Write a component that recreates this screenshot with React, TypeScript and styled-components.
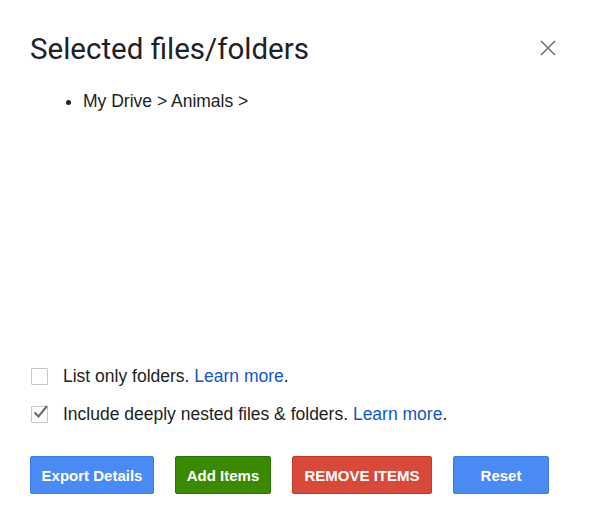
import styled, { createGlobalStyle } from "styled-components";

const GlobalStyle = createGlobalStyle`
  html, body {
    margin: 0;
    padding: 0;
    background: #ffffff;
  }
`;

export default function App() {
  return (
    <>
      <GlobalStyle />
      <Dialog>
        <Header>
          <Title>Selected files/folders</Title>
          <CloseButton aria-label="Close">
            <svg width="16" height="16" viewBox="0 0 16 16">
              <path d="M1 1 L15 15 M15 1 L1 15" stroke="#757575" strokeWidth="1.6" fill="none" />
            </svg>
          </CloseButton>
        </Header>
        <PathList>
          <li>My Drive &gt; Animals &gt;</li>
        </PathList>
        <Options>
          <OptionRow>
            <CheckBox />
            <OptionText>
              List only folders. <LearnMore href="#">Learn more</LearnMore>.
            </OptionText>
          </OptionRow>
          <OptionRow>
            <CheckBox>
              <svg width="20" height="20" viewBox="0 0 20 20">
                <path d="M3.5 9.5 L7.5 13.5 L16 3" stroke="#6a6a6a" strokeWidth="2" fill="none" />
              </svg>
            </CheckBox>
            <OptionText>
              Include deeply nested files &amp; folders. <LearnMore href="#">Learn more</LearnMore>.
            </OptionText>
          </OptionRow>
        </Options>
        <ButtonRow>
          <ActionButton $color="#4a8af4" $border="#3b7de8" $width={124}>Export Details</ActionButton>
          <ActionButton $color="#398a00" $border="#2d7200" $width={96}>Add Items</ActionButton>
          <ActionButton $color="#d9493a" $border="#c53727" $width={140}>REMOVE ITEMS</ActionButton>
          <ActionButton $color="#4a8af4" $border="#3b7de8" $width={96}>Reset</ActionButton>
        </ButtonRow>
      </Dialog>
    </>
  );
}

const Dialog = styled("div")`
  box-sizing: border-box;
  width: 600px;
  height: 523px;
  padding: 31px 44px 29px 30px;
  display: flex;
  flex-direction: column;
  font-family: "Liberation Sans", Arial, sans-serif;
  color: #222222;
`;

const Header = styled("div")`
  display: flex;
  justify-content: space-between;
  align-items: center;
`;

const Title = styled("h1")`
  margin: 0;
  font-family: Roboto, "Liberation Sans", sans-serif;
  font-weight: 400;
  font-size: 29.5px;
  line-height: 36px;
  color: #202124;
`;

const CloseButton = styled("button")`
  border: none;
  background: none;
  padding: 0;
  margin-top: -2px;
  width: 16px;
  height: 16px;
  cursor: pointer;
  display: flex;
`;

const PathList = styled("ul")`
  flex: 1;
  margin: 23px 0 0 0;
  padding-left: 53px;
  font-size: 17.5px;
  line-height: 22px;
  color: #222222;
`;

const Options = styled("div")`
  display: flex;
  flex-direction: column;
  gap: 18px;
  margin-bottom: 32px;
`;

const OptionRow = styled("label")`
  display: flex;
  align-items: center;
  gap: 15px;
  height: 20px;
`;

const CheckBox = styled("span")`
  position: relative;
  box-sizing: border-box;
  width: 17px;
  height: 17px;
  margin-left: 1px;
  border: 1px solid #c6c6c6;
  border-radius: 1px;
  flex-shrink: 0;

  svg {
    position: absolute;
    left: -1px;
    top: -4px;
  }
`;

const OptionText = styled("span")`
  font-size: 17.5px;
  color: #222222;
`;

const LearnMore = styled("a")`
  color: #1155cc;
  text-decoration: none;
`;

const ButtonRow = styled("div")`
  display: flex;
  gap: 21px;
`;

const ActionButton = styled("button")<{ $color: string; $border: string; $width: number }>`
  box-sizing: border-box;
  width: ${(p) => p.$width}px;
  height: 38px;
  padding: 0;
  background: ${(p) => p.$color};
  border: 1px solid ${(p) => p.$border};
  border-radius: 2px;
  color: #ffffff;
  font-family: "Liberation Sans", Arial, sans-serif;
  font-weight: 700;
  font-size: 15px;
  cursor: pointer;
`;
